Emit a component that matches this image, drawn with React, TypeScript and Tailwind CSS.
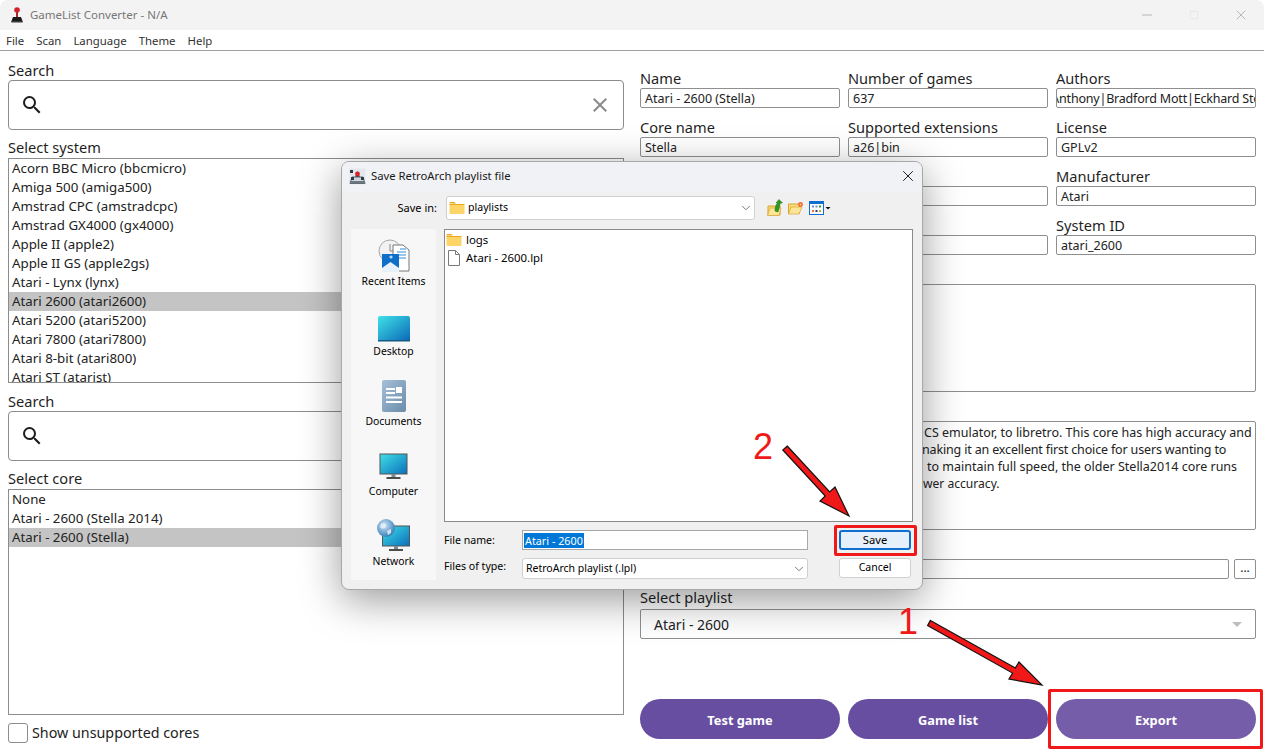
import React from 'react';
import { MdSearch, MdClose, MdArrowDropDown } from 'react-icons/md';
import { ChevronDown, X, Minus, Square } from 'lucide-react';

const SYSTEMS = [
  'Acorn BBC Micro (bbcmicro)', 'Amiga 500 (amiga500)', 'Amstrad CPC (amstradcpc)', 'Amstrad GX4000 (gx4000)',
  'Apple II (apple2)', 'Apple II GS (apple2gs)', 'Atari - Lynx (lynx)', 'Atari 2600 (atari2600)',
  'Atari 5200 (atari5200)', 'Atari 7800 (atari7800)', 'Atari 8-bit (atari800)', 'Atari ST (atarist)',
];
const CORES = ['None', 'Atari - 2600 (Stella 2014)', 'Atari - 2600 (Stella)'];

function Joystick() {
  return (
    <svg width="16" height="17" viewBox="0 0 16 17">
      <circle cx="8" cy="3" r="2.8" fill="#d3222a" />
      <rect x="7" y="5" width="2" height="5" fill="#a8282c" />
      <path d="M4 10 L12 10 L13.5 14 L2.5 14 Z" fill="#1a1a1a" />
      <rect x="2" y="14" width="12" height="1.6" rx="0.8" fill="#3a3a3a" />
    </svg>
  );
}

function DialogJoystick() {
  return (
    <svg width="17" height="17" viewBox="0 0 17 17">
      <rect x="0.5" y="0.5" width="16" height="16" fill="#e4e8ee" />
      <path d="M1 15.5 L3 9 h11 l2 6.5 z" fill="#cfd6de" stroke="#5c6670" strokeWidth="1" />
      <path d="M6 9 L8.5 3 L11 9 z" fill="#4d5660" />
      <circle cx="8.5" cy="6" r="2.4" fill="#d3222a" />
      <rect x="1" y="13" width="15" height="2.5" fill="#6d7781" />
      <rect x="1" y="2" width="3" height="3" fill="#2e3a48" />
      <rect x="2" y="9" width="3" height="3" fill="#2e3a48" />
      <rect x="12" y="9" width="3" height="3" fill="#2e3a48" />
    </svg>
  );
}

function Folder({ size = 16 }: { size?: number }) {
  return (
    <svg width={size} height={size} viewBox="0 0 16 16">
      <path d="M0.5 3 a1 1 0 0 1 1-1 h4 l1.5 1.5 h-6.5 z" fill="#eaa91e" />
      <path d="M0.5 4.5 h14 a1 1 0 0 1 1 1 v7.5 a1 1 0 0 1 -1 1 h-13 a1 1 0 0 1 -1 -1 z" fill="#fdd468" />
      <path d="M0.5 4.5 h15" stroke="#eaa91e" strokeWidth="1" />
    </svg>
  );
}

function FileIcon() {
  return (
    <svg width="16" height="16" viewBox="0 0 16 16" fill="#fff" stroke="#7a7a7a" strokeWidth="1">
      <path d="M2.5 0.5 h7 l4 4 v11 h-11 z" />
      <path d="M9.5 0.5 v4 h4" fill="none" />
    </svg>
  );
}

function UpFolder() {
  return (
    <svg width="16" height="18" viewBox="0 0 16 18">
      <path d="M1 7 h12 v9 h-12 z" fill="#f8dc7c" stroke="#d9a32c" />
      <path d="M0.5 16.5 L3 9 h11 l-2 7.5 z" fill="#fbe697" stroke="#d9a32c" strokeWidth="0.7" />
      <path d="M8 12 C8 8 9 5 11 4 L9 4 L12 0.5 L15.5 4 L13.5 4 C12.5 6 12.5 9 11 13 Z" fill="#2c9a22" stroke="#1a6f14" strokeWidth="0.5" />
    </svg>
  );
}

function NewFolder() {
  return (
    <svg width="16" height="14" viewBox="0 0 16 14">
      <path d="M0.5 3 h11 v9.5 h-11 z" fill="#f8dc7c" stroke="#d9a32c" />
      <path d="M0.5 13 L3 6 h11 l-3 7 z" fill="#fbe697" stroke="#d9a32c" strokeWidth="0.7" />
      <circle cx="12.5" cy="3.5" r="2.4" fill="#f2603a" />
      <circle cx="12.5" cy="3.5" r="1" fill="#ffd86a" />
    </svg>
  );
}

function ViewMenu() {
  return (
    <svg width="22" height="15" viewBox="0 0 22 15">
      <rect x="0.5" y="0.5" width="14" height="13" fill="#fff" stroke="#0f6fce" />
      <rect x="0.5" y="0.5" width="14" height="2.5" fill="#0f6fce" />
      <rect x="3" y="4.5" width="2" height="2" fill="#6a8fc9" />
      <rect x="6.5" y="4.5" width="2" height="2" fill="#6a8fc9" />
      <rect x="10" y="4.5" width="2" height="2" fill="#2a9a3a" />
      <rect x="3" y="9" width="2" height="2" fill="#ea7a2a" />
      <rect x="6.5" y="9" width="2" height="2" fill="#1f3f8a" />
      <rect x="10" y="9" width="2" height="2" fill="#d9a32c" />
      <path d="M16.5 6 h5 l-2.5 2.5 z" fill="#111" />
    </svg>
  );
}

function Monitor({ globe }: { globe?: boolean }) {
  return (
    <svg width="34" height="34" viewBox="0 0 34 34">
      <defs>
        <linearGradient id="scr" x1="0" y1="0" x2="1" y2="1">
          <stop offset="0" stopColor="#3fe0e6" />
          <stop offset="1" stopColor="#0b6fbd" />
        </linearGradient>
        <radialGradient id="glb" cx="0.4" cy="0.35" r="0.7">
          <stop offset="0" stopColor="#cfe6f5" />
          <stop offset="1" stopColor="#2f78b5" />
        </radialGradient>
      </defs>
      <rect x={globe ? 5.5 : 3} y={globe ? 7 : 5} width="27" height="20" fill="url(#scr)" stroke="#555" strokeWidth="1" />
      <rect x={globe ? 17 : 14.5} y={globe ? 27 : 25} width="4" height="3" fill="#7a8a90" />
      <rect x={globe ? 12 : 9.5} y={globe ? 30 : 28} width="14" height="2" fill="#4d4d4d" />
      {globe && <circle cx="9" cy="9" r="9" fill="url(#glb)" />}
      {globe && <path d="M4 5 C7 3 10 5 9 8 C7 10 4 10 3 8 Z M10 12 l4 -2 l0 4 l-3 2 z" fill="#e8f2f8" opacity="0.8" />}
    </svg>
  );
}

function DesktopIcon() {
  return (
    <svg width="34" height="28" viewBox="0 0 34 28">
      <defs>
        <linearGradient id="dsk" x1="0" y1="0" x2="1" y2="1">
          <stop offset="0" stopColor="#40e3e8" />
          <stop offset="1" stopColor="#0b69b8" />
        </linearGradient>
      </defs>
      <path d="M1 3 a2 2 0 0 1 2 -2 h28 a2 2 0 0 1 2 2 v22 h-32 z" fill="url(#dsk)" />
      <rect x="1" y="25" width="32" height="1.5" fill="#155a86" />
    </svg>
  );
}

function DocumentsIcon() {
  return (
    <svg width="26" height="34" viewBox="0 0 26 34">
      <defs>
        <linearGradient id="doc" x1="0" y1="0" x2="1" y2="1">
          <stop offset="0" stopColor="#a5bfd8" />
          <stop offset="1" stopColor="#6a8cab" />
        </linearGradient>
      </defs>
      <rect x="1" y="1" width="24" height="32" rx="2" fill="url(#doc)" />
      <rect x="5" y="9" width="9" height="2" fill="#fff" />
      <rect x="5" y="13" width="9" height="2" fill="#fff" />
      <rect x="15" y="8" width="6" height="6" fill="#fff" />
      <rect x="5" y="17.5" width="16" height="2" fill="#fff" />
      <rect x="5" y="22" width="16" height="2" fill="#fff" />
    </svg>
  );
}

function RecentIcon() {
  return (
    <svg width="34" height="34" viewBox="0 0 34 34">
      <circle cx="13" cy="12" r="11" fill="#f2f2f2" stroke="#a9a9a9" />
      <path d="M13 5 v7 h5" fill="none" stroke="#888" />
      <path d="M16 6 h10 l6 5 v21 h-16 z" fill="#fff" stroke="#777" />
      <path d="M20 13 h9 M20 16 h9 M20 19 h9 M23 10 h6" stroke="#2f8fd8" />
      <path d="M5 15 h17 v18 h-17 z" fill="#0f6ec8" />
      <path d="M5 33 v-4 l8.5 -6 l8.5 6 v4 z" fill="#e8f1fa" />
      <circle cx="14" cy="18" r="1.6" fill="#bcd9f3" />
    </svg>
  );
}

function Label({ children, tight }: { children: React.ReactNode; tight?: boolean }) {
  return (
    <div className={`h-5 text-[14.6px] text-[#1f1f1f] whitespace-nowrap ${tight ? 'leading-[18px]' : 'leading-5'}`}>
      {children}
    </div>
  );
}

function Field({ label, value, clip }: { label: string; value: string; clip?: boolean }) {
  return (
    <div className="min-w-0">
      <Label>{label}</Label>
      <div className="h-5 border border-[#8f8f8f] rounded-[2px] bg-white px-1 text-[12.5px] leading-[19px] text-[#222] overflow-hidden whitespace-nowrap">
        {clip ? <span className="block -ml-[60px] tracking-[-0.2px]">{value}</span> : value}
      </div>
    </div>
  );
}

function SearchBox({ clear }: { clear?: boolean }) {
  return (
    <div className="h-[50px] border border-[#8c8c8c] rounded-[4px] flex items-center justify-between pl-[11px] pr-[11px]">
      <MdSearch className="w-6 h-6 text-[#1c1c1c]" />
      {clear && <MdClose className="w-6 h-6 text-[#8a8a8a]" />}
    </div>
  );
}

function ListBox({ items, selected, height }: { items: string[]; selected: number; height: string }) {
  return (
    <div className={`border border-[#8c8c8c] overflow-hidden ${height}`}>
      {items.map((item, i) => (
        <div
          key={item}
          className={`h-[19px] pl-[3px] text-[13.3px] leading-[19px] text-[#222] whitespace-nowrap ${i === selected ? 'bg-[#c4c4c4]' : ''}`}
        >
          {item}
        </div>
      ))}
    </div>
  );
}

function SidebarItem({ icon, label }: { icon: React.ReactNode; label: string }) {
  return (
    <div className="h-[70px] flex flex-col items-center">
      <div className="h-[45px] flex items-end justify-center pb-[1px]">{icon}</div>
      <div className="text-[10.4px] leading-[14px] text-black whitespace-nowrap">{label}</div>
    </div>
  );
}

function Combo({ children, className }: { children: React.ReactNode; className: string }) {
  return (
    <div className={`flex items-center justify-between bg-white border border-[#cfcfcf] rounded-[3px] pl-[2px] pr-[1px] text-[10.7px] text-black ${className}`}>
      {children}
      <ChevronDown className="w-[14px] h-[14px] text-[#666]" strokeWidth={1.5} />
    </div>
  );
}

function SaveDialog() {
  return (
    <div className="absolute left-[341px] top-[161px] w-[582px] h-[429px] bg-[#f0f0f0] border border-[#a8a8a8] rounded-[8px] overflow-hidden shadow-[0_10px_40px_rgba(0,0,0,0.4)] font-['Noto_Sans',sans-serif]">
      <div className="h-[30px] bg-[#f1f2f5] flex items-center justify-between pl-[7px] pr-[5px] pb-[2px]">
        <div className="flex items-center gap-[5px]">
          <DialogJoystick />
          <span className="text-[11.3px] text-[#1a1a1a]">Save RetroArch playlist file</span>
        </div>
        <X className="w-[18px] h-[18px] text-[#1a1a1a]" strokeWidth={1.3} />
      </div>
      <div className="h-[37px] flex items-start pt-[4px]">
        <div className="w-[95px] h-[24px] text-right text-[11px] leading-[24px] text-black">Save in:</div>
        <Combo className="ml-[9px] w-[309px] h-[24px]">
          <div className="flex items-center gap-[3px]">
            <Folder />
            <span className="text-[10.6px]">playlists</span>
          </div>
        </Combo>
        <div className="ml-[12px] h-[24px] flex items-center gap-[5px]">
          <UpFolder />
          <NewFolder />
          <ViewMenu />
        </div>
      </div>
      <div className="flex pl-[9px]">
        <div className="w-[85px] h-[351px] bg-[#f7f7f7]">
          <SidebarItem icon={<RecentIcon />} label="Recent Items" />
          <SidebarItem icon={<DesktopIcon />} label="Desktop" />
          <SidebarItem icon={<DocumentsIcon />} label="Documents" />
          <SidebarItem icon={<Monitor />} label="Computer" />
          <SidebarItem icon={<Monitor globe />} label="Network" />
        </div>
        <div className="ml-[8px] w-[469px]">
          <div className="h-[293px] bg-white border border-[#8a8a8a] pl-[1px] pt-px text-[11.4px] text-black">
            <div className="h-[18px] flex items-center gap-[4px]">
              <Folder />
              <span>logs</span>
            </div>
            <div className="h-[18px] flex items-center gap-[4px]">
              <FileIcon />
              <span>Atari - 2600.lpl</span>
            </div>
          </div>
          <div className="mt-[8px] flex">
            <div className="w-[78px] text-[10.6px] text-black">
              <div className="h-[20px] leading-[20px]">File name:</div>
              <div className="mt-[8px] h-[21px] leading-[17px]">Files of type:</div>
            </div>
            <div className="w-[286px]">
              <div className="h-[20px] bg-white border border-[#a8a8a8] pl-[1px] flex items-center text-[10.8px]">
                <span className="bg-[#0078d7] text-white leading-[15px] px-[1px]">Atari - 2600</span>
              </div>
              <Combo className="mt-[8px] h-[21px]">
                <span className="pl-[1px] text-[10.5px]">RetroArch playlist (.lpl)</span>
              </Combo>
            </div>
            <div className="ml-[31px] w-[72px]">
              <div className="h-[20px] bg-[#e6f0fa] border-2 border-[#0f6fce] rounded-[3px] text-center text-[11.2px] leading-[16px] text-black">Save</div>
              <div className="mt-[8px] h-[20px] bg-white border border-[#d0d0d0] rounded-[3px] text-center text-[10.5px] leading-[17px] text-black">Cancel</div>
            </div>
          </div>
        </div>
      </div>
    </div>
  );
}

function Annotations() {
  return (
    <>
      <svg className="absolute left-0 top-0 pointer-events-none" width="1264" height="751" viewBox="0 0 1264 751">
        <polygon points="787.2,446 829.7,492 835,487 849,516 820,501 825.3,496 782.8,450" fill="#f01818" stroke="#111" strokeWidth="1.2" />
        <polygon points="930.4,620.4 1015.4,667.9 1019,662 1042,685 1009,679 1012.6,673.1 927.6,625.6" fill="#f01818" stroke="#111" strokeWidth="1.2" />
      </svg>
      <div className="absolute left-[753px] top-[426px] text-[36px] leading-[42px] text-[#f01818] font-['Liberation_Sans',sans-serif]">2</div>
      <div className="absolute left-[898px] top-[601px] text-[36px] leading-[42px] text-[#f01818] font-['Liberation_Sans',sans-serif]">1</div>
      <div className="absolute left-[834px] top-[525px] w-[83px] h-[31px] border-[3px] border-[#f01818] rounded-[2px]" />
      <div className="absolute left-[1048px] top-[689px] w-[215px] h-[60px] border-[3px] border-[#f01818] rounded-[2px]" />
    </>
  );
}

export default function App() {
  return (
    <div className="relative w-[1264px] h-[751px] overflow-hidden bg-white font-['Noto_Sans',sans-serif] text-[#222]">
      {/* title bar */}
      <div className="h-[30px] bg-[#f3f3f3] rounded-t-[8px] flex items-center justify-between pl-[9px]">
        <div className="flex items-center gap-[5px]">
          <Joystick />
          <span className="text-[11.5px] text-[#777]">GameList Converter - N/A</span>
        </div>
        <div className="flex items-center pr-[15px] gap-[34px] text-[#999]">
          <Minus className="w-[16px] h-[16px]" strokeWidth={1} />
          <Square className="w-[10px] h-[10px] text-[#d8d8d8]" strokeWidth={1} />
          <X className="w-[16px] h-[16px]" strokeWidth={1} />
        </div>
      </div>
      {/* menu bar */}
      <div className="h-[21px] pt-[2px] border-b border-[#a0a0a0] flex items-center gap-[12px] pl-[6px] text-[11.4px] text-[#333]">
        <span>File</span>
        <span>Scan</span>
        <span>Language</span>
        <span>Theme</span>
        <span>Help</span>
      </div>

      <div className="flex gap-4 px-2">
        {/* left column */}
        <div className="w-[616px] pt-[9px]">
          <Label>Search</Label>
          <SearchBox clear />
          <div className="mt-2"><Label tight>Select system</Label></div>
          <ListBox items={SYSTEMS} selected={7} height="h-[225px]" />
          <div className="mt-2"><Label>Search</Label></div>
          <SearchBox />
          <div className="mt-2"><Label tight>Select core</Label></div>
          <ListBox items={CORES} selected={2} height="h-[226px]" />
          <div className="mt-2 flex items-center gap-[4px] h-5">
            <div className="w-5 h-5 border border-[#8c8c8c] rounded-[3px]" />
            <span className="text-[14.3px]">Show unsupported cores</span>
          </div>
        </div>

        {/* right column */}
        <div className="w-[616px] pt-[17px]">
          <div className="grid grid-cols-3 gap-x-2 gap-y-[9px]">
            <Field label="Name" value="Atari - 2600 (Stella)" />
            <Field label="Number of games" value="637" />
            <Field label="Authors" value="Stephen Anthony|Bradford Mott|Eckhard Stolberg" clip />
            <Field label="Core name" value="Stella" />
            <Field label="Supported extensions" value="a26|bin" />
            <Field label="License" value="GPLv2" />
            <Field label="Permissions" value="" />
            <Field label="Version" value="" />
            <Field label="Manufacturer" value="Atari" />
            <Field label="Category" value="" />
            <Field label="Database" value="" />
            <Field label="System ID" value="atari_2600" />
          </div>
          <div className="mt-[9px]"><Label>Firmware</Label></div>
          <div className="h-[108px] border border-[#8f8f8f] rounded-[2px]" />
          <div className="mt-[9px]"><Label>Description</Label></div>
          <div className="h-[109px] border border-[#8f8f8f] rounded-[2px] pt-[2px] text-[12.5px] leading-[17px] text-[#222] overflow-hidden whitespace-nowrap">
            <div className="pl-[283px]">CS emulator, to libretro. This core has high accuracy and</div>
            <div className="pl-[281px] tracking-[-0.16px]">naking it an excellent first choice for users wanting to</div>
            <div className="pl-[286px]">to maintain full speed, the older Stella2014 core runs</div>
            <div className="pl-[282px] text-[12.1px]">wer accuracy.</div>
          </div>
          <div className="mt-[9px]"><Label>Playlist folder</Label></div>
          <div className="flex gap-[5px]">
            <div className="flex-1 h-5 border border-[#8f8f8f] rounded-[2px]" />
            <div className="w-[22px] h-5 border border-[#8f8f8f] rounded-[2px] text-center text-[12px] leading-[16px]">...</div>
          </div>
          <div className="mt-[8px]"><Label>Select playlist</Label></div>
          <div className="mt-[2px] h-[30px] border border-[#8f8f8f] rounded-[2px] flex items-center justify-between pl-[13px] pr-[6px]">
            <span className="text-[14px]">Atari - 2600</span>
            <MdArrowDropDown className="w-6 h-6 text-[#bdbdbd]" />
          </div>
          <div className="mt-[60px] grid grid-cols-3 gap-x-2 text-white font-bold text-[12.8px]">
            <div className="h-10 pt-[3px] rounded-full bg-[#674ea1] flex items-center justify-center">Test game</div>
            <div className="h-10 pt-[3px] rounded-full bg-[#674ea1] flex items-center justify-center">Game list</div>
            <div className="h-10 pt-[3px] rounded-full bg-[#755da9] flex items-center justify-center">Export</div>
          </div>
        </div>
      </div>

      <SaveDialog />
      <Annotations />
    </div>
  );
}
